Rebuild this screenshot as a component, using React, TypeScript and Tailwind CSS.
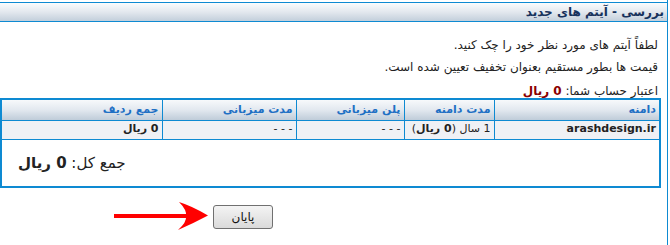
const COLS: { title: string; width: string }[] = [
  { title: 'دامنه', width: 'w-[165px]' },
  { title: 'مدت دامنه', width: 'w-[90px]' },
  { title: 'پلن میزبانی', width: 'w-[108px]' },
  { title: 'مدت میزبانی', width: 'w-[134px]' },
  { title: 'جمع ردیف', width: 'w-[160px]' },
];

function Arrow() {
  return (
    <svg className="absolute left-0 top-0" width="670" height="245" viewBox="0 0 670 245">
      <rect x="114" y="214" width="72" height="4" fill="#ff0000" />
      <path
        d="M208,215.5 Q192,206 179,202 Q187,210 186,216 Q187,222 178,230 Q192,224 208,215.5 Z"
        fill="#ff0000"
      />
    </svg>
  );
}

export default function App() {
  const cell = 'border-l border-b border-[#0e8ad2] px-[3px] text-right';
  return (
    <div
      dir="rtl"
      className="relative w-[670px] h-[245px] overflow-hidden bg-white text-[12px] text-[#222]"
      style={{ fontFamily: '"DejaVu Sans", Tahoma, sans-serif' }}
    >
      <div className="mr-[2px] w-[668px] h-[245px] pt-[2px] border-r border-[#0e8ad2]">
        <div className="h-[20px] border-y border-[#0e8ad2] bg-gradient-to-b from-[#fbfcfd] via-[#e3e8ee] to-[#c3cfdb] px-[3px] text-[12px] font-bold leading-[18px] text-[#17325c]">
          بررسی - آیتم های جدید
        </div>

        <div className="pr-[6px]">
          <p className="mt-[16px] pr-[3px] leading-[14px]">لطفاً آیتم های مورد نظر خود را چک کنید.</p>
          <p className="mt-[8px] pr-[3px] leading-[14px]">قیمت ها بطور مستقیم بعنوان تخفیف تعیین شده است.</p>
          <p className="mt-[10px] pr-[3px] leading-[14px]">
            اعتبار حساب شما: <b className="text-[#8b0000]">0 ریال</b>
          </p>

          <div className="w-[661px] border-2 border-[#0e8ad2]">
            <table className="w-full table-fixed border-collapse text-[11px]">
              <thead>
                <tr className="h-[20px] bg-gradient-to-b from-[#f7f9fb] via-[#e2e8ef] to-[#bfccd9]">
                  {COLS.map((c, i) => (
                    <th
                      key={c.title}
                      className={`${cell} ${c.width} font-bold text-[#1f70c4] ${i === COLS.length - 1 ? 'border-l-0' : ''}`}
                    >
                      {c.title}
                    </th>
                  ))}
                </tr>
              </thead>
              <tbody>
                <tr className="h-[19px] bg-[#eff1f5]">
                  <td className={`${cell} font-bold`}>arashdesign.ir</td>
                  <td className={cell}>
                    1 سال (<b>0 ریال</b>)
                  </td>
                  <td className={cell}>- - -</td>
                  <td className={cell}>- - -</td>
                  <td className={`${cell} border-l-0 font-bold`}>0 ریال</td>
                </tr>
              </tbody>
            </table>
            <div className="h-[46px] pl-[16px] pt-[13px] text-left text-[15px] leading-[20px]">
              جمع کل: <b>0 ریال</b>
            </div>
          </div>

          <div dir="ltr" className="mt-[17px] pl-[213px]">
            <button
              type="button"
              className="h-[24px] w-[60px] rounded-[3px] border border-[#707070] bg-gradient-to-b from-[#f4f4f4] to-[#dadada] text-[12px] leading-[20px] text-[#111]"
            >
              پایان
            </button>
          </div>
        </div>
      </div>
      <Arrow />
    </div>
  );
}
